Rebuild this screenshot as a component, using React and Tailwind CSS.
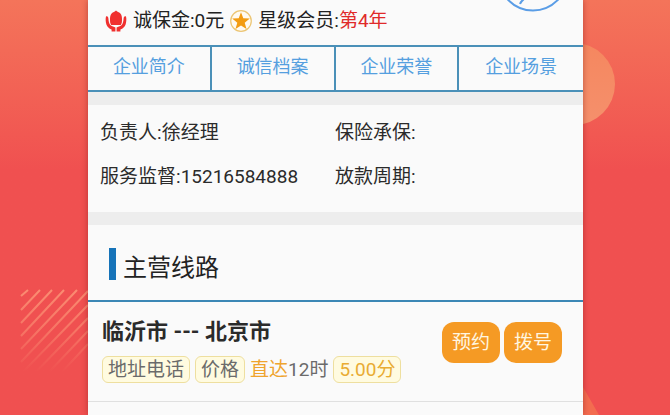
const tabs = ["企业简介", "诚信档案", "企业荣誉", "企业场景"];

const contacts = [
  { label: "负责人", value: "徐经理" },
  { label: "保险承保", value: "" },
  { label: "服务监督", value: "15216584888" },
  { label: "放款周期", value: "" },
];

function DepositIcon() {
  return (
    <svg viewBox="0 0 22 22" className="w-[22px] h-[22px]" fill="#f0302f">
      <path d="M11 0.5C12 1.8 14 2 15.4 3.4C16.8 5 17 7 17 9.5C17 12 16.8 13.5 15.8 15H6.2C5.2 13.5 5 12 5 9.5C5 7 5.2 5 6.6 3.4C8 2 10 1.8 11 0.5Z" />
      <path d="M1 6.5C2.4 6 3.2 6.8 3.4 8.5C3.6 11.5 4 13.6 5.6 15.2C7 16.4 9 16.6 10.4 17.6V21.5H6.6V19.4C4 18.4 2.4 17 1.4 14.4C0.6 12 0.4 8.5 1 6.5Z" />
      <path d="M21 6.5C19.6 6 18.8 6.8 18.6 8.5C18.4 11.5 18 13.6 16.4 15.2C15 16.4 13 16.6 11.6 17.6V21.5H15.4V19.4C18 18.4 19.6 17 20.6 14.4C21.4 12 21.6 8.5 21 6.5Z" />
    </svg>
  );
}

function StarIcon() {
  return (
    <svg viewBox="0 0 22 22" className="w-[22px] h-[22px]">
      <circle cx="11" cy="11" r="10.3" fill="#fffaf0" stroke="#ecc573" strokeWidth="1.2" />
      <path d="M11 2.2L13.3 8.3L19.8 8.6L14.7 12.7L16.5 19L11 15.4L5.5 19L7.3 12.7L2.2 8.6L8.7 8.3Z" fill="#f39c11" />
    </svg>
  );
}

function Backdrop() {
  return (
    <>
      {/* Striped patch, fading out towards the bottom */}
      <svg viewBox="0 0 68 84" className="absolute left-[20px] top-[288px] w-[68px] h-[84px]" fill="none">
        <defs>
          <linearGradient id="fade" gradientUnits="userSpaceOnUse" x1="0" y1="0" x2="0" y2="84">
            <stop offset="0" stopColor="#fb8d72" />
            <stop offset="0.5" stopColor="#f87f6a" stopOpacity="0.8" />
            <stop offset="1" stopColor="#f87f6a" stopOpacity="0" />
          </linearGradient>
        </defs>
        <path
          d="M1 8L8 2M1 22L20 2M1 35L32 2M1 48L44 2M1 61L57 2M1 74L68 3M3 84L68 17M16 84L68 30M29 84L68 43M42 84L68 56"
          stroke="url(#fade)"
          strokeWidth="2"
        />
      </svg>
      <div className="absolute right-[55px] top-[43px] size-[82px] rounded-full bg-linear-to-b from-[#f5875f] to-[#f5906c]" />
      <svg viewBox="0 0 16 28" className="absolute right-[71px] top-[387px] w-[16px] h-[28px]">
        <path d="M0 0L16 28H0Z" fill="#f36c50" />
      </svg>
    </>
  );
}

function CompanyHeader() {
  return (
    <section className="relative h-[45px] px-[17px] flex items-center overflow-hidden">
      <p className="flex items-center -mt-1 text-[19px] leading-6 text-[#222]">
        <DepositIcon />
        <span className="mx-[6px]">诚保金:0元</span>
        <StarIcon />
        <span className="ml-[6px]">
          星级会员:<span className="text-[#e02a2a]">第4年</span>
        </span>
      </p>
      <svg viewBox="0 0 56 12" className="absolute right-[22px] top-0 w-[56px] h-[12px]" fill="none" stroke="#5a9de6">
        <circle cx="28" cy="-24" r="34.5" strokeWidth="2" />
        <path d="M15 4C16 1 18 0 20 -2" strokeWidth="2" />
      </svg>
    </section>
  );
}

function TabBar() {
  return (
    <nav className="grid grid-cols-4 divide-x-2 divide-[#4a90b8] border-y-2 border-[#4a90b8]">
      {tabs.map((tab) => (
        <a key={tab} href="#" className="h-[43px] pb-1 flex items-center justify-center text-[18px] leading-6 text-[#559fdf]">
          {tab}
        </a>
      ))}
    </nav>
  );
}

function RouteRow() {
  return (
    <article className="h-[101px] pl-[14px] pr-[21px] pt-4 flex justify-between border-t-2 border-[#3c87b5]">
      <div>
        <h3 className="text-[22px] leading-7 font-bold text-[#2b2b2b]">临沂市 --- 北京市</h3>
        <div className="mt-[10px] flex items-center gap-[5px] text-[19px] leading-[25px] text-[#6b6b6b]">
          <span className="px-[5px] rounded-md border border-[#eedf9f] bg-[#fffbe0]">地址电话</span>
          <span className="px-[5px] rounded-md border border-[#eedf9f] bg-[#fffbe0]">价格</span>
          <span>
            <span className="text-[#efa42e]">直达</span>12时
          </span>
          <span className="px-[5px] rounded-md border border-[#eedf9f] bg-[#fffbe0] text-[#e9ac33]">5.00分</span>
        </div>
      </div>
      <div className="pt-1 flex items-start gap-1 text-[19px] leading-6 text-[#fff6e0]">
        <button className="w-[58px] h-[41px] rounded-xl bg-[#f59a24]">预约</button>
        <button className="w-[58px] h-[41px] rounded-xl bg-[#f59a24]">拨号</button>
      </div>
    </article>
  );
}

export default function App() {
  return (
    <div className="relative min-h-screen overflow-hidden flex flex-col bg-[#f05050] bg-linear-to-b from-[#f4745a] to-[#f05050] to-[170px] font-['Roboto','Noto_Sans_CJK_SC',sans-serif]">
      <Backdrop />
      <main className="relative grow ml-[88px] mr-[87px] bg-[#fafafa] shadow-[0_0_6px_rgba(120,20,20,0.45)]">
        <CompanyHeader />
        <TabBar />

        <dl className="grid grid-cols-[235px_1fr] content-start gap-y-5 h-[133px] px-3 pt-4 border-y-13 border-[#ededed] text-[19px] leading-6 text-[#2b2b2b]">
          {contacts.map(({ label, value }) => (
            <div key={label} className="flex">
              <dt>{label}:</dt>
              <dd>{value}</dd>
            </div>
          ))}
        </dl>

        <div className="h-[75px] pl-[21px] pt-[23px] flex items-start gap-[7px]">
          <span className="w-[7px] h-8 bg-[#1673b8]" />
          <h2 className="pt-1 text-[24px] leading-8 text-[#222]">主营线路</h2>
        </div>
        <RouteRow />
        <div className="border-t border-[#e0e0e0]" />
      </main>
    </div>
  );
}
